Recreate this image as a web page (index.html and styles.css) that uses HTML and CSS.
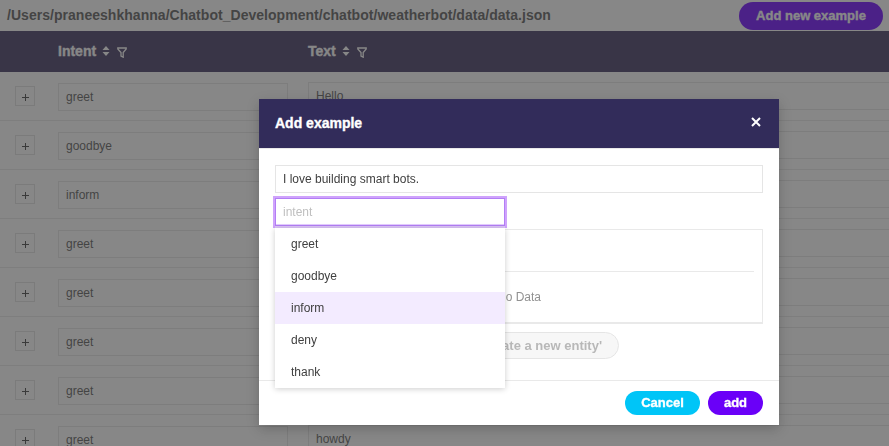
FILE: index.html
```html
<!DOCTYPE html>
<html lang="en">
<head>
<meta charset="utf-8">
<title>Training data</title>
<link rel="stylesheet" href="styles.css">
</head>
<body>
<div class="page">
  <header class="topbar">
    <span class="path">/Users/praneeshkhanna/Chatbot_Development/chatbot/weatherbot/data/data.json</span>
    <button class="btn new">Add new example</button>
  </header>
  <div class="thead">
    <div class="th th-intent"><span>Intent</span>
      <svg class="sort" viewBox="0 0 8 12"><path d="M0.500 5L4 1l3.500 4zM0.500 7L4 11l3.500-4z" fill="currentColor"/></svg>
      <svg class="filter" viewBox="0 0 10 11"><path d="M0.800 1h8.400v1L6.200 5.500v4.700L4 9V5.500L0.800 2z" fill="none" stroke="currentColor" stroke-width="1.300"/></svg>
    </div>
    <div class="th th-text"><span>Text</span>
      <svg class="sort" viewBox="0 0 8 12"><path d="M0.500 5L4 1l3.500 4zM0.500 7L4 11l3.500-4z" fill="currentColor"/></svg>
      <svg class="filter" viewBox="0 0 10 11"><path d="M0.800 1h8.400v1L6.200 5.500v4.700L4 9V5.500L0.800 2z" fill="none" stroke="currentColor" stroke-width="1.300"/></svg>
    </div>
  </div>
  <div class="row"><span class="expand"></span><div class="field intent">greet</div><div class="field text">Hello</div></div>
  <div class="row"><span class="expand"></span><div class="field intent">goodbye</div><div class="field text"></div></div>
  <div class="row"><span class="expand"></span><div class="field intent">inform</div><div class="field text"></div></div>
  <div class="row"><span class="expand"></span><div class="field intent">greet</div><div class="field text"></div></div>
  <div class="row"><span class="expand"></span><div class="field intent">greet</div><div class="field text"></div></div>
  <div class="row"><span class="expand"></span><div class="field intent">greet</div><div class="field text"></div></div>
  <div class="row"><span class="expand"></span><div class="field intent">greet</div><div class="field text"></div></div>
  <div class="row"><span class="expand"></span><div class="field intent">greet</div><div class="field text">howdy</div></div>
</div>
<div class="mask">
  <section class="modal">
    <div class="modal-head"><span class="modal-title">Add example</span>
      <svg class="close" viewBox="0 0 10 10"><path d="M1 1l8 8M9 1L1 9" stroke="#fff" stroke-width="2" fill="none"/></svg>
    </div>
    <div class="modal-body">
      <div class="field sentence">I love building smart bots.</div>
      <div class="select">
        <div class="field search">intent</div>
        <div class="menu">
          <div class="option">greet</div>
          <div class="option">goodbye</div>
          <div class="option active">inform</div>
          <div class="option">deny</div>
          <div class="option">thank</div>
        </div>
      </div>
      <div class="entities"><div class="entities-head"></div><div class="empty">No Data</div></div>
      <button class="btn create">Create a new entity'</button>
    </div>
    <div class="modal-foot"><button class="btn cancel">Cancel</button><button class="btn add">add</button></div>
  </section>
</div>
</body>
</html>
```
FILE: styles.css
```css
* { box-sizing: border-box; }
html, body { margin: 0; height: 446px; overflow: hidden; }
body {
  font: 12px/18px "Liberation Sans", Arial, sans-serif;
  color: #595959;
  background: #fff;
}
.page { height: 446px; overflow: hidden; }
.topbar {
  height: 31px;
  padding: 0 6px 0 7px;
  display: flex;
  justify-content: space-between;
  align-items: flex-start;
}
.path {
  font-size: 14px;
  font-weight: bold;
  line-height: 31px;
  letter-spacing: .033px;
  white-space: nowrap;
}
.btn {
  border: 0;
  margin: 0;
  padding: 0;
  border-radius: 20px;
  font: bold 13px/24px "Liberation Sans", Arial, sans-serif;
  color: #fff;
  text-align: center;
  white-space: nowrap;
}
.new, .cancel, .add, .th span, .modal-title { -webkit-text-stroke: .35px currentColor; }
.new { width: 144px; height: 28px; margin-top: 2px; line-height: 28px; background: #6a00ff; }
.thead { height: 41px; display: flex; background: #3c325f; color: #fff; }
.th { display: flex; align-items: center; font-size: 14px; font-weight: bold; }
.th span { margin-bottom: 2px; }
.th-intent { width: 250px; margin-left: 58px; }
.sort { width: 8px; height: 12px; margin: 0 0 2px 6px; }
.filter { width: 10px; height: 11px; margin: 1px 0 0 7px; }
.row {
  height: 49px;
  display: flex;
  align-items: flex-start;
  border-bottom: 1px solid #e9e9e9;
}
.expand {
  flex: none;
  width: 20px;
  height: 20px;
  margin: 14px 23px 0 15px;
  border: 1px solid #e0e0e0;
  background:
    linear-gradient(#404040, #404040) 6px 10px / 7px 1px no-repeat,
    linear-gradient(#404040, #404040) 9px 7px / 1px 7px no-repeat;
}
.field {
  height: 28px;
  border: 1px solid #e5e5e5;
  padding: 0 7px;
  line-height: 26px;
  white-space: nowrap;
}
.intent { flex: none; width: 230px; margin: 11px 20px 0 0; }
.text { flex: none; width: 620px; margin-top: 10px; }
.mask {
  position: fixed;
  inset: 0;
  padding: 99px 0 0 259px;
  background: rgba(55, 55, 55, .6);
}
.modal {
  width: 520px;
  height: 326px;
  display: flex;
  flex-direction: column;
  background: #fff;
  box-shadow: 0 4px 12px rgba(0, 0, 0, .2);
}
.modal-head {
  height: 50px;
  flex: none;
  padding: 0 18px 0 16px;
  display: flex;
  align-items: center;
  justify-content: space-between;
  background: #322c5a;
  border-bottom: 1px solid #e9e9e9;
  background-clip: padding-box;
}
.modal-title { color: #fff; font-size: 14px; font-weight: bold; margin-bottom: 2px; }
.close { width: 10px; height: 10px; margin-bottom: 3px; }
.modal-body { flex: 1; padding: 16px 16px 0; }
.sentence { color: #404040; }
.select { position: relative; width: 230px; margin-top: 5px; }
.search {
  color: #bfbfbf;
  border-color: #b37ef5;
  box-shadow: inset 0 -1px #e3ccff, 0 2px #dcc5f8, 0 0 0 2px #cfa3fc;
}
.menu {
  position: absolute;
  top: 30px;
  left: 0;
  width: 230px;
  background: #fff;
  box-shadow: 0 1px 6px rgba(0, 0, 0, .2);
}
.option { height: 32px; padding: 0 16px; line-height: 32px; color: #404040; }
.active { background: #f3ebff; }
.entities {
  height: 95px;
  margin-top: 3px;
  padding: 0 8px;
  border: 1px solid #e9e9e9;
  border-bottom-width: 2px;
}
.entities-head { height: 42px; border-bottom: 1px solid #e9e9e9; }
.empty { line-height: 50px; text-align: center; color: #919191; }
.create {
  display: block;
  width: 200px;
  height: 27px;
  margin: 8px auto 0;
  padding-right: 16px;
  line-height: 25px;
  border: 1px solid #e5e5e5;
  background: #f7f7f7;
  color: #b8b8b8;
  text-align: right;
}
.modal-foot {
  height: 45px;
  flex: none;
  display: flex;
  justify-content: flex-end;
  gap: 8px;
  padding: 10px 16px;
  border-top: 1px solid #e9e9e9;
}
.cancel { width: 75px; height: 24px; background: #00c5f7; }
.add { width: 55px; height: 24px; background: #6a00f8; }
```
